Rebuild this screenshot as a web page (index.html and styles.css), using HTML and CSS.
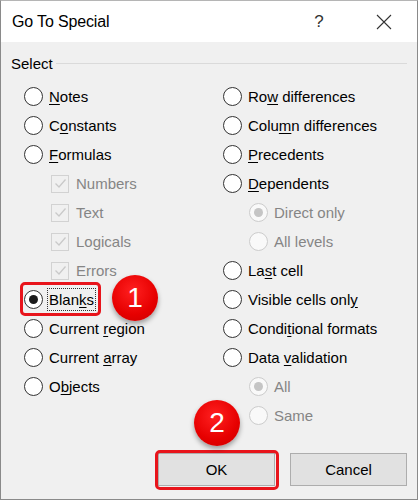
FILE: index.html
```html
<!DOCTYPE html>
<html>
<head>
<meta charset="utf-8">
<link rel="stylesheet" href="styles.css">
</head>
<body>
<div class="dialog">
  <div class="titlebar">
    <span class="title">Go To Special</span>
    <span class="help">?</span>
    <span class="close">
      <svg width="16" height="16" viewBox="0 0 16 16"><path d="M1 1 L15 15 M15 1 L1 15" stroke="#333" stroke-width="1.1" fill="none"/></svg>
    </span>
  </div>
  <div class="content">
    <div class="group-label"><span>Select</span><div class="line"></div></div>
    <div class="cols">
      <div class="col">
        <div class="opt"><span class="radio"></span><span class="txt"><u>N</u>otes</span></div>
        <div class="opt"><span class="radio"></span><span class="txt">C<u>o</u>nstants</span></div>
        <div class="opt"><span class="radio"></span><span class="txt"><u>F</u>ormulas</span></div>
        <div class="opt sub disabled"><span class="check"><svg width="15" height="15" viewBox="0 0 15 15"><path d="M2.5 7.5 L6 11 L12.5 3.5" stroke="#c9c9c9" stroke-width="1.3" fill="none"/></svg></span><span class="txt">Numbers</span></div>
        <div class="opt sub disabled"><span class="check"><svg width="15" height="15" viewBox="0 0 15 15"><path d="M2.5 7.5 L6 11 L12.5 3.5" stroke="#c9c9c9" stroke-width="1.3" fill="none"/></svg></span><span class="txt">Text</span></div>
        <div class="opt sub disabled"><span class="check"><svg width="15" height="15" viewBox="0 0 15 15"><path d="M2.5 7.5 L6 11 L12.5 3.5" stroke="#c9c9c9" stroke-width="1.3" fill="none"/></svg></span><span class="txt">Logicals</span></div>
        <div class="opt sub disabled"><span class="check"><svg width="15" height="15" viewBox="0 0 15 15"><path d="M2.5 7.5 L6 11 L12.5 3.5" stroke="#c9c9c9" stroke-width="1.3" fill="none"/></svg></span><span class="txt">Errors</span></div>
        <div class="opt"><span class="radio checked"></span><span class="txt focus">Blan<u>k</u>s</span></div>
        <div class="opt"><span class="radio"></span><span class="txt">Current <u>r</u>egion</span></div>
        <div class="opt"><span class="radio"></span><span class="txt">Current <u>a</u>rray</span></div>
        <div class="opt"><span class="radio"></span><span class="txt">O<u>b</u>jects</span></div>
      </div>
      <div class="col">
        <div class="opt"><span class="radio"></span><span class="txt">Ro<u>w</u> differences</span></div>
        <div class="opt"><span class="radio"></span><span class="txt">Colu<u>m</u>n differences</span></div>
        <div class="opt"><span class="radio"></span><span class="txt"><u>P</u>recedents</span></div>
        <div class="opt"><span class="radio"></span><span class="txt"><u>D</u>ependents</span></div>
        <div class="opt sub disabled"><span class="radio checked"></span><span class="txt">Direct only</span></div>
        <div class="opt sub disabled"><span class="radio"></span><span class="txt">All levels</span></div>
        <div class="opt"><span class="radio"></span><span class="txt">La<u>s</u>t cell</span></div>
        <div class="opt"><span class="radio"></span><span class="txt">Visible cells onl<u>y</u></span></div>
        <div class="opt"><span class="radio"></span><span class="txt">Condi<u>t</u>ional formats</span></div>
        <div class="opt"><span class="radio"></span><span class="txt">Data <u>v</u>alidation</span></div>
        <div class="opt sub disabled"><span class="radio checked"></span><span class="txt">All</span></div>
        <div class="opt sub disabled"><span class="radio"></span><span class="txt">Same</span></div>
      </div>
    </div>
    <div class="buttons">
      <button class="btn">OK</button>
      <button class="btn">Cancel</button>
    </div>
  </div>
  <div class="hl hl-blanks"></div>
  <div class="hl hl-ok"></div>
  <div class="badge badge-1">1</div>
  <div class="badge badge-2">2</div>
</div>
</body>
</html>
```
FILE: styles.css
```css
* { box-sizing: border-box; }
html, body { margin: 0; padding: 0; }
body {
  background: #f0f0f0;
  font-family: "Liberation Sans", Arial, sans-serif;
  font-size: 15px;
  color: #000;
}
.dialog {
  position: relative;
  width: 418px;
  height: 500px;
  background: #f0f0f0;
  border: 1px solid #8a8a8a;
  border-top-color: #b5b5b5;
}
.titlebar {
  height: 41px;
  background: #fff;
  display: flex;
  align-items: center;
  padding: 0 10px 0 11px;
}
.title {
  flex: 1;
  font-size: 16px;
  letter-spacing: -0.15px;
  color: #000;
}
.help {
  width: 16px;
  text-align: center;
  font-size: 17px;
  color: #333;
  margin-right: 34px;
}
.close {
  width: 46px;
  display: flex;
  justify-content: center;
  align-items: center;
}
.close svg { display: block; }
.content {
  padding: 13px 10px 0 10px;
}
.group-label {
  display: flex;
  align-items: center;
  height: 18px;
  line-height: 18px;
  gap: 3px;
}
.group-label .line {
  flex: 1;
  height: 1px;
  background: #dadada;
  margin-top: -2px;
}
.cols {
  display: grid;
  grid-template-columns: 199px 1fr;
  padding-left: 13px;
  margin-top: 9px;
}
.col { display: flex; flex-direction: column; }
.opt {
  height: 29px;
  display: flex;
  align-items: center;
  gap: 6px;
}
.opt.sub { padding-left: 26px; }
.radio {
  width: 19px;
  height: 19px;
  border: 1px solid #333;
  border-radius: 50%;
  background: #fff;
  display: flex;
  align-items: center;
  justify-content: center;
  flex: none;
}
.radio.checked::after {
  content: "";
  width: 9px;
  height: 9px;
  border-radius: 50%;
  background: #1a1a1a;
}
.disabled .radio {
  border-color: #cccccc;
  background: #f9f9f9;
}
.disabled .radio.checked::after { background: #c5c5c5; }
.check {
  width: 18px;
  height: 18px;
  border: 1px solid #d2d2d2;
  background: #f0f0f0;
  display: flex;
  align-items: center;
  justify-content: center;
  flex: none;
  margin-left: 1px;
  margin-right: 1px;
}
.check svg { display: block; }
.disabled .txt { color: #858585; }
.txt u { text-decoration: underline; text-underline-offset: 2px; }
.txt.focus {
  outline: 1px dotted #333;
  outline-offset: 0;
  padding: 2px 1px;
  margin-left: -1px;
}
.buttons {
  display: flex;
  justify-content: flex-end;
  gap: 15px;
  margin-top: 23px;
}
.btn {
  width: 117px;
  height: 33px;
  background: #e1e1e1;
  border: 1px solid #adadad;
  font-family: "Liberation Sans", Arial, sans-serif;
  font-size: 15px;
  color: #000;
  padding: 0;
}
.hl {
  position: absolute;
  border: 3px solid #e8141b;
  border-radius: 5px;
}
.hl-blanks { left: 19px; top: 281px; width: 81px; height: 34px; }
.hl-ok { left: 154px; top: 449px; width: 124px; height: 40px; }
.badge {
  position: absolute;
  border-radius: 50%;
  background: radial-gradient(circle at 45% 35%, #ff2020 0%, #e60000 60%, #c80000 100%);
  box-shadow: 0 3px 5px rgba(0,0,0,0.35);
  color: #fff;
  font-family: "Liberation Sans", Arial, sans-serif;
  font-size: 28px;
  display: flex;
  align-items: center;
  justify-content: center;
}
.badge-1 { left: 111px; top: 274px; width: 46px; height: 46px; }
.badge-2 { left: 193px; top: 399px; width: 46px; height: 46px; }
```
